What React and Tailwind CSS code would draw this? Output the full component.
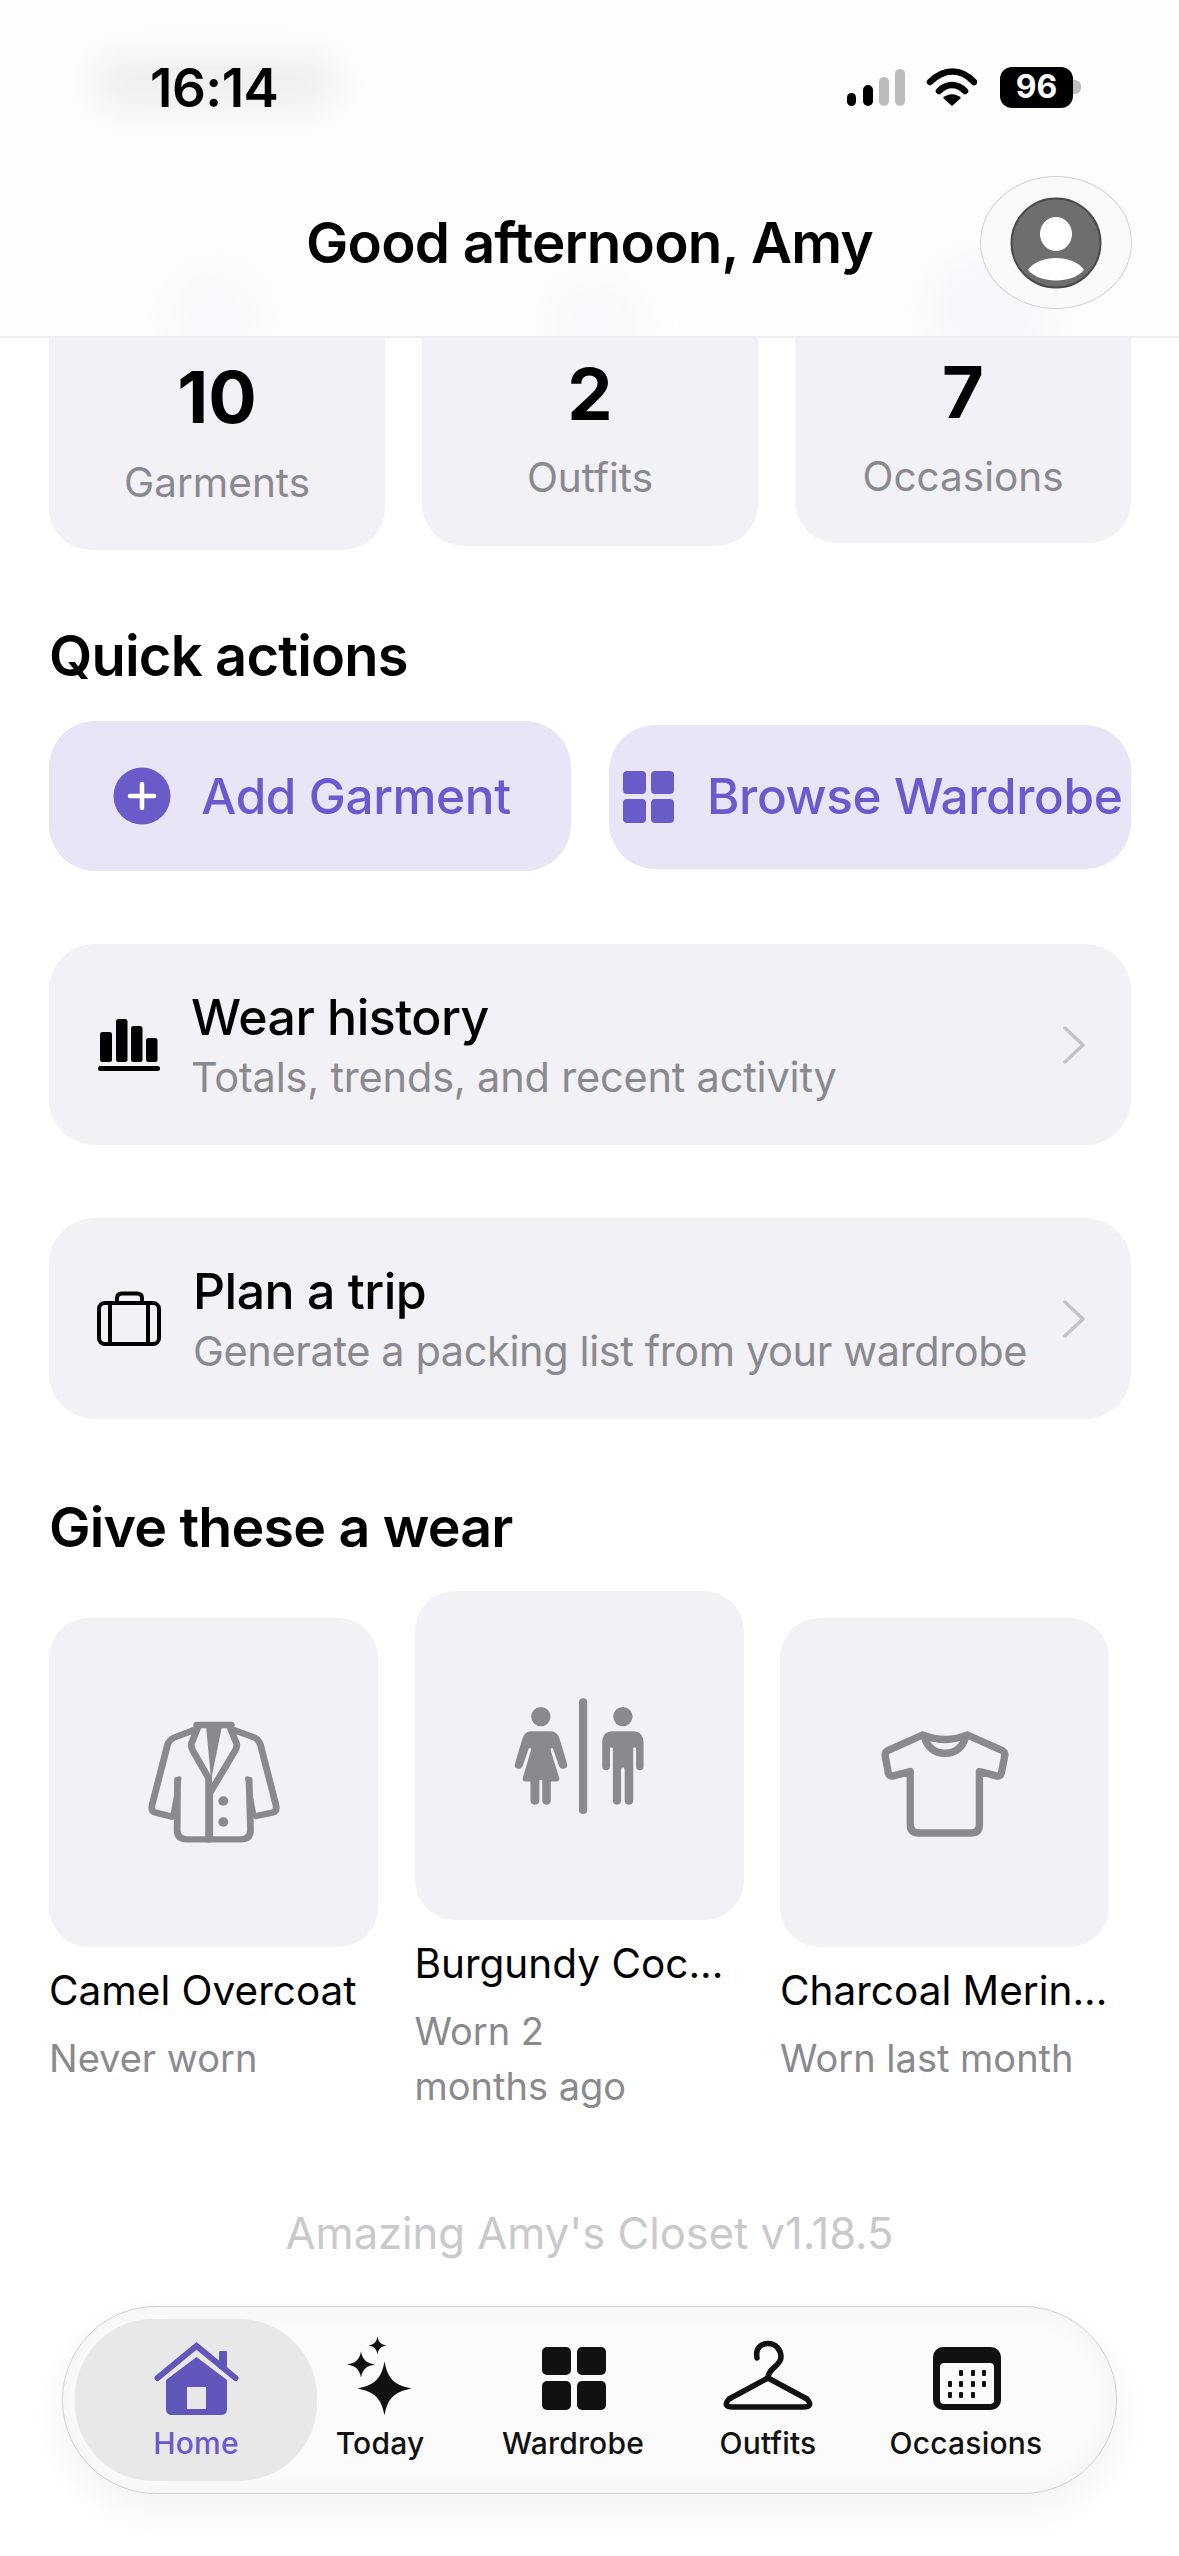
import React from 'react';

const star = (cx, cy, rx, ry) => {
  const a = rx * 0.12;
  const b = ry * 0.12;
  return `M${cx} ${cy - ry} C${cx + a} ${cy - b * 3} ${cx + a * 3} ${cy - b} ${cx + rx} ${cy} C${cx + a * 3} ${cy + b} ${cx + a} ${cy + b * 3} ${cx} ${cy + ry} C${cx - a} ${cy + b * 3} ${cx - a * 3} ${cy + b} ${cx - rx} ${cy} C${cx - a * 3} ${cy - b} ${cx - a} ${cy - b * 3} ${cx} ${cy - ry}Z`;
};

function StatusIcons() {
  return (
    <div className="flex items-center">
      <svg width="130" height="40" viewBox="846 67 130 40">
        <rect x="846" y="93" width="9" height="13" rx="4.5" fill="#000" />
        <rect x="862" y="85" width="10" height="21" rx="5" fill="#000" />
        <rect x="878" y="77" width="10" height="29" rx="5" fill="#bcbcbc" />
        <rect x="894" y="69" width="10" height="37" rx="5" fill="#bcbcbc" />
        <path d="M929 82 C943 68 960 68 973 82" fill="none" stroke="#000" strokeWidth="6.5" strokeLinecap="round" />
        <path d="M938 91 C946 83 956 83 964 91" fill="none" stroke="#000" strokeWidth="6.5" strokeLinecap="round" />
        <path d="M942 98 C947 93 955 93 960 98 L951 106Z" fill="#000" />
      </svg>
      <div className="ml-[23px] flex h-[41px] w-[73px] items-center justify-center rounded-[12px] bg-black text-[32px] font-bold leading-none text-white">
        96
      </div>
      <div className="h-[14px] w-[8px] rounded-r-[6px] bg-[#bcbcbc]" />
    </div>
  );
}

function Avatar() {
  return (
    <div className="flex h-[133px] w-[152px] items-center justify-center rounded-[50%] border border-[#d2d2d2] bg-[#fafafa]">
      <svg width="92" height="92" viewBox="0 0 92 92">
        <circle cx="46" cy="46" r="44.5" fill="#6e6e6e" stroke="#4a4a4a" strokeWidth="2" />
        <ellipse cx="46" cy="37" rx="16" ry="17" fill="#fff" />
        <path d="M18 73 C28 57 64 57 74 73 C62 87 30 87 18 73Z" fill="#fff" />
      </svg>
    </div>
  );
}

function StatCard({ value, label, height, pad, gap }) {
  return (
    <div className={`flex w-[336px] flex-col items-center rounded-b-[42px] bg-[#f1f1f6] ${height} ${pad}`}>
      <div className="text-[72px] font-bold leading-[72px] text-black">{value}</div>
      <div className={`text-[40.5px] leading-[50px] text-[#8a8a8e] ${gap}`}>{label}</div>
    </div>
  );
}

function WearIcon() {
  return (
    <svg width="66" height="56" viewBox="95 1017 66 56" className="shrink-0">
      <rect x="99" y="1032" width="12" height="30" rx="2.5" fill="#000" />
      <rect x="115" y="1019" width="11.5" height="43" rx="2.5" fill="#000" />
      <rect x="130" y="1026" width="11.5" height="36" rx="2.5" fill="#000" />
      <rect x="145" y="1038" width="11.5" height="24" rx="2.5" fill="#000" />
      <rect x="97" y="1066" width="62" height="5" rx="2.5" fill="#000" />
    </svg>
  );
}

function TripIcon() {
  return (
    <svg width="66" height="56" viewBox="96 1291 66 56" className="shrink-0">
      <rect x="99" y="1303" width="60" height="41" rx="6" fill="none" stroke="#000" strokeWidth="4" />
      <path d="M117 1302 V1298 Q117 1293.500 122 1293.500 H137 Q142 1293.500 142 1298 V1302" fill="none" stroke="#000" strokeWidth="4" />
      <path d="M110 1303 V1344 M148 1303 V1344" stroke="#000" strokeWidth="4" />
    </svg>
  );
}

function Chevron() {
  return (
    <svg width="24" height="38" viewBox="0 0 24 38" className="shrink-0">
      <path d="M3 2 L21 19 L3 36" fill="none" stroke="#c4c4c7" strokeWidth="3.500" strokeLinecap="round" strokeLinejoin="round" />
    </svg>
  );
}

function LinkRow({ icon, title, subtitle, gap, tracking }) {
  return (
    <div className="flex h-[201px] w-[1082px] items-center rounded-[46px] bg-[#f1f1f6] pl-[47px] pr-[45px]">
      {icon}
      <div className={`flex-1 ${gap}`}>
        <div className="text-[50px] font-medium leading-[60px] tracking-[-0.5px] text-black">{title}</div>
        <div className={`mt-[5px] text-[41.5px] leading-[50px] text-[#8a8a8e] ${tracking}`}>{subtitle}</div>
      </div>
      <Chevron />
    </div>
  );
}

function CoatIcon() {
  return (
    <svg width="136" height="125" viewBox="70 120 380 375" preserveAspectRatio="none" fill="none" stroke="#8a8a8e" strokeWidth="19" strokeLinecap="round" strokeLinejoin="round">
      <path d="M205 150 L150 172 Q135 178 130 195 L87 375 Q83 395 97 398 L142 410" />
      <path d="M315 150 L372 172 Q385 178 390 195 L433 375 Q437 395 423 398 L378 408" />
      <path d="M158 300 L157 450 Q157 478 185 478 H335 Q362 478 362 450 L358 300" />
      <path d="M163 295 L145 400 M353 295 L372 400" strokeWidth="12" />
      <path d="M212 135 H308" strokeWidth="20" />
      <path d="M216 140 L197 190 Q195 200 200 210 L245 295 V478" />
      <path d="M304 140 L323 190 Q325 200 320 210 L248 340 V478" />
      <path d="M238 140 H282 L252 300Z" fill="#8a8a8e" stroke="none" />
      <circle cx="286" cy="363" r="14" fill="#8a8a8e" stroke="none" />
      <circle cx="286" cy="426" r="14" fill="#8a8a8e" stroke="none" />
    </svg>
  );
}

function RestroomIcon() {
  return (
    <svg width="132" height="118" viewBox="1100 50 370 355" preserveAspectRatio="none" fill="#8a8a8e">
      <ellipse cx="1178" cy="109" rx="27" ry="29" />
      <ellipse cx="1408" cy="109" rx="27" ry="29" />
      <rect x="1285" y="54" width="23" height="348" rx="11.500" />
      <path d="M1150 153 H1206 Q1225 153 1232 180 L1252 252 Q1253 265 1240 266 Q1232 266 1228 255 L1212 205 Q1207 200 1205 208 L1230 295 Q1230 304 1222 304 H1206 V360 Q1206 374 1194 374 Q1182 374 1182 360 V300 H1174 V360 Q1174 374 1161 374 Q1149 374 1149 360 V304 H1135 Q1126 304 1127 295 L1151 208 Q1149 200 1144 205 L1128 255 Q1124 266 1116 266 Q1103 265 1105 252 L1125 180 Q1132 153 1150 153Z" />
      <path d="M1380 153 H1436 Q1466 153 1466 190 V258 Q1466 270 1455 270 Q1445 270 1445 258 V206 Q1445 202 1441 202 Q1437 202 1437 206 V360 Q1437 374 1425 374 Q1413 374 1413 360 V268 Q1413 262 1408 262 Q1403 262 1403 268 V360 Q1403 374 1391 374 Q1380 374 1380 360 V206 Q1380 202 1376 202 Q1372 202 1372 206 V258 Q1372 270 1361 270 Q1350 270 1350 258 V190 Q1350 153 1380 153Z" />
    </svg>
  );
}

function ShirtIcon() {
  return (
    <svg width="132" height="108" viewBox="120 150 395 325" className="mt-[2px]" fill="none" stroke="#8a8a8e" strokeWidth="22" strokeLinejoin="round">
      <path d="M250 165 L145 212 Q135 218 138 230 L147 280 Q150 290 162 288 L213 275 V435 Q213 460 240 460 H395 Q421 460 421 435 V275 L472 288 Q484 290 487 280 L497 230 Q500 218 490 212 L385 165 Q320 192 250 165Z" />
      <path d="M255 170 Q270 220 318 220 Q365 220 380 170" />
    </svg>
  );
}

function GarmentCard({ icon, name, children, offset }) {
  return (
    <div className={`w-[329px] ${offset}`}>
      <div className="flex h-[329px] w-[329px] items-center justify-center rounded-[40px] bg-[#f1f1f6]">{icon}</div>
      <div className="mt-[19px] truncate text-[40.5px] leading-[50px] text-black">{name}</div>
      <div className="mt-[15px] text-[38px] leading-[55px] text-[#8a8a8e]">{children}</div>
    </div>
  );
}

function HomeIcon() {
  return (
    <svg width="100" height="80" viewBox="146 2337 100 80" fill="#6157bb">
      <path d="M157.500 2378 L196.500 2346 L235.500 2378" fill="none" stroke="#6157bb" strokeWidth="6" strokeLinecap="round" />
      <rect x="219" y="2351" width="8" height="18" rx="1" />
      <path fillRule="evenodd" d="M196.500 2357 L227 2380 V2409 Q227 2415 221 2415 H172 Q166 2415 166 2409 V2380Z M187 2387 V2409 H206 V2387Z" />
    </svg>
  );
}

function TodayIcon() {
  return (
    <svg width="100" height="80" viewBox="330 2337 100 80" fill="#111">
      <path d={star(384.500, 2388.500, 27, 27)} />
      <path d={star(361, 2364.500, 14, 13)} />
      <path d={star(377.500, 2345.500, 9, 9)} />
    </svg>
  );
}

function WardrobeIcon() {
  return (
    <svg width="100" height="80" viewBox="523 2337 100 80" fill="#111">
      <rect x="542" y="2347" width="29" height="28" rx="5" />
      <rect x="577" y="2347" width="29" height="28" rx="5" />
      <rect x="542" y="2381" width="29" height="29" rx="5" />
      <rect x="577" y="2381" width="29" height="29" rx="5" />
    </svg>
  );
}

function OutfitsIcon() {
  return (
    <svg width="100" height="80" viewBox="718 2337 100 80" fill="none" stroke="#111" strokeWidth="5.500" strokeLinecap="round" strokeLinejoin="round">
      <path d="M757 2358 C755 2347 762 2343.500 768 2343.500 C776 2343.500 781 2350 781 2357 C781 2366 768 2368 768 2378" />
      <path d="M768 2378 L729 2399 Q722 2407 733 2407 H803 Q814 2407 807 2399Z" />
    </svg>
  );
}

function OccasionsIcon() {
  const dots = [
    [961, 2373], [973, 2373], [984, 2373],
    [950, 2384], [961, 2384], [973, 2384], [984, 2384],
    [950, 2395], [961, 2395], [973, 2395],
  ];
  return (
    <svg width="100" height="80" viewBox="916 2337 100 80">
      <rect x="933" y="2347" width="68" height="63" rx="10" fill="#111" />
      <rect x="940" y="2363" width="54" height="41" rx="4" fill="#fbfbfb" />
      {dots.map(([x, y]) => (
        <rect key={`${x}-${y}`} x={x - 2} y={y - 3} width="4" height="6" rx="1" fill="#111" />
      ))}
    </svg>
  );
}

function NavItem({ icon, label, width, active }) {
  return (
    <div className={`flex h-[162px] flex-col items-center pt-[18px] ${width} ${active ? 'rounded-[78px] bg-[#e8e8e8]' : ''}`}>
      {icon}
      <div className={`mt-[8px] text-[30px] font-medium leading-[36px] tracking-[0.2px] ${active ? 'text-[#6a5acd]' : 'text-[#111]'}`}>{label}</div>
    </div>
  );
}

export default function App() {
  return (
    <div className="flex h-[2556px] w-[1179px] flex-col overflow-hidden bg-white [font-family:Inter,sans-serif]">
      {/* Header */}
      <header className="relative h-[338px] shrink-0 overflow-hidden border-b-[2px] border-[#eeeeee] bg-[#fdfdfd]">
        <div className="absolute left-[95px] top-[60px] h-[45px] w-[240px] rounded-full bg-[#ececec] blur-[18px]" />
        <div className="absolute left-[170px] top-[270px] h-[90px] w-[90px] rounded-full bg-[#f8f8fc] blur-[20px]" />
        <div className="absolute left-[550px] top-[280px] h-[90px] w-[90px] rounded-full bg-[#f8f8fc] blur-[20px]" />
        <div className="absolute left-[930px] top-[260px] h-[100px] w-[120px] rounded-full bg-[#f6f6fb] blur-[20px]" />
        <div className="relative mt-[60px] flex h-[54px] items-center justify-between pl-[150px] pr-[98px]">
          <div className="pt-[2px] text-[53px] font-semibold leading-none tracking-[-0.5px] text-black">16:14</div>
          <StatusIcons />
        </div>
        <div className="relative mt-[62px] grid grid-cols-[1fr_auto_1fr] items-center px-[47px]">
          <div />
          <div className="text-[56.5px] font-semibold leading-[64px] tracking-[-0.8px] text-black">Good afternoon, Amy</div>
          <div className="justify-self-end"><Avatar /></div>
        </div>
      </header>

      {/* Stats */}
      <div className="flex items-start gap-[37px] pl-[49px]">
        <StatCard value="10" label="Garments" height="h-[212px]" pad="pt-[23px]" gap="mt-[25px]" />
        <StatCard value="2" label="Outfits" height="h-[208px]" pad="pt-[20px]" gap="mt-[23px]" />
        <StatCard value="7" label="Occasions" height="h-[205px]" pad="pt-[18px]" gap="mt-[24px]" />
      </div>

      <h2 className="ml-[49px] mt-[76px] text-[56px] font-semibold leading-[60px] tracking-[-0.8px] text-black">Quick actions</h2>

      {/* Quick action buttons */}
      <div className="ml-[49px] mt-[35px] flex items-start gap-[38px]">
        <div className="flex h-[150px] w-[522px] items-center justify-center gap-[30px] rounded-[46px] bg-[#e8e6f6] pl-[4px]">
          <svg width="58" height="58" viewBox="0 0 58 58" className="shrink-0">
            <circle cx="29" cy="29" r="28.500" fill="#6a5cc8" />
            <path d="M29 17 V41 M17 29 H41" stroke="#fff" strokeWidth="4.500" strokeLinecap="round" />
          </svg>
          <span className="pt-[2px] text-[49.5px] font-medium leading-none tracking-[-0.4px] text-[#6a5acd]">Add Garment</span>
        </div>
        <div className="mt-[4px] flex h-[144px] w-[522px] items-center gap-[32px] rounded-[46px] bg-[#e8e6f6] pl-[14px]">
          <svg width="52" height="52" viewBox="0 0 52 52" className="shrink-0" fill="#6a5cc8">
            <rect x="0" y="0" width="23" height="23" rx="4" />
            <rect x="28" y="0" width="23" height="23" rx="4" />
            <rect x="0" y="28" width="23" height="24" rx="4" />
            <rect x="28" y="28" width="23" height="24" rx="4" />
          </svg>
          <span className="whitespace-nowrap text-[49.5px] font-medium leading-none tracking-[-0.4px] text-[#6a5acd]">Browse Wardrobe</span>
        </div>
      </div>

      <div className="ml-[49px] mt-[73px]">
        <LinkRow icon={<WearIcon />} title="Wear history" subtitle="Totals, trends, and recent activity" gap="ml-[29px]" tracking="tracking-[-0.2px]" />
      </div>
      <div className="ml-[49px] mt-[73px]">
        <LinkRow icon={<TripIcon />} title="Plan a trip" subtitle="Generate a packing list from your wardrobe" gap="ml-[31px]" tracking="tracking-[-0.4px]" />
      </div>

      <h2 className="ml-[49px] mt-[78px] text-[55.5px] font-semibold leading-[60px] tracking-[-0.8px] text-black">Give these a wear</h2>

      {/* Garments */}
      <div className="ml-[49px] mt-[34px] flex h-[590px] items-start gap-[36.5px]">
        <GarmentCard icon={<CoatIcon />} name="Camel Overcoat" offset="mt-[27px]">Never worn</GarmentCard>
        <GarmentCard icon={<RestroomIcon />} name="Burgundy Coc..." offset="">Worn 2<br />months ago</GarmentCard>
        <GarmentCard icon={<ShirtIcon />} name="Charcoal Merin..." offset="mt-[27px]">Worn last month</GarmentCard>
      </div>

      <div className="mt-[27px] text-center text-[43.5px] leading-[50px] text-[#c9c9cc]">Amazing Amy's Closet v1.18.5</div>

      {/* Bottom nav */}
      <nav className="ml-[62px] mt-[48px] flex h-[188px] w-[1055px] items-center rounded-[94px] border-[1.5px] border-[#cfcfcf] bg-[#fbfbfb] pl-[12px] shadow-[inset_0_0_28px_rgba(0,0,0,0.04),0_16px_36px_rgba(0,0,0,0.05)]">
        <NavItem icon={<HomeIcon />} label="Home" width="w-[242px]" active />
        <NavItem icon={<TodayIcon />} label="Today" width="w-[126px]" />
        <NavItem icon={<WardrobeIcon />} label="Wardrobe" width="w-[260px]" />
        <NavItem icon={<OutfitsIcon />} label="Outfits" width="w-[130px]" />
        <NavItem icon={<OccasionsIcon />} label="Occasions" width="w-[266px]" />
      </nav>
    </div>
  );
}
